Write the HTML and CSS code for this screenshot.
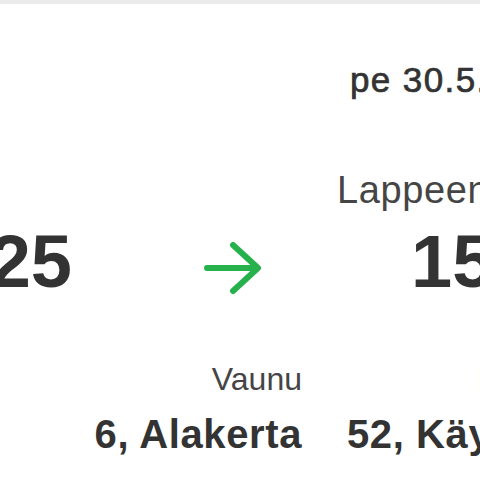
FILE: index.html
```html
<!DOCTYPE html>
<html lang="fi">
<head>
<meta charset="utf-8">
<title>Lippu</title>
<link rel="stylesheet" href="styles.css">
</head>
<body>
<div class="topbar"></div>
<main class="ticket">
  <div class="date">pe 30.5.2025</div>
  <div class="stations">
    <span class="station">Lappeenranta</span>
  </div>
  <div class="times">
    <div class="time-cell time-from"><span class="time">12:25</span></div>
    <svg class="arrow" width="58" height="54" viewBox="0 0 58 54" aria-hidden="true">
      <path d="M4 26 H53 M30 3 L55 26 L30 49" fill="none" stroke="#27b14c" stroke-width="6" stroke-linecap="round" stroke-linejoin="round"/>
    </svg>
    <div class="time-cell time-to"><span class="time">15:10</span></div>
  </div>
  <div class="seats">
    <div class="seat seat-car">
      <span class="label">Vaunu</span>
      <span class="value">6, Alakerta</span>
    </div>
    <div class="seat seat-place">
      <span class="label">Paikka</span>
      <span class="value">52, Käytävä</span>
    </div>
  </div>
</main>
</body>
</html>
```
FILE: styles.css
```css
html, body {
  margin: 0;
  padding: 0;
}
body {
  width: 480px;
  height: 480px;
  overflow: hidden;
  background: #ffffff;
  font-family: "Liberation Sans", Arial, sans-serif;
  color: #333333;
}
.topbar {
  height: 4px;
  background: #ebebeb;
}
.ticket {
  display: flex;
  flex-direction: column;
}
.date {
  margin-top: 56px;
  padding-left: 350px;
  font-size: 35px;
  line-height: 40px;
  font-weight: 400;
  letter-spacing: 1.4px;
  -webkit-text-stroke: 0.7px #333333;
  white-space: nowrap;
}
.stations {
  margin-top: 68px;
  padding-left: 337px;
  font-size: 38px;
  line-height: 44px;
  letter-spacing: 0.6px;
  color: #454545;
  white-space: nowrap;
}
.times {
  margin-top: 10px;
  display: flex;
  align-items: flex-start;
  height: 80px;
}
.time-cell {
  display: flex;
  flex: none;
  white-space: nowrap;
}
.time-from {
  width: 72px;
  justify-content: flex-end;
}
.time-to {
  margin-left: 150px;
}
.time {
  font-size: 74px;
  line-height: 80px;
  font-weight: 700;
}
.arrow {
  flex: none;
  margin-left: 131px;
  margin-top: 20px;
}
.seats {
  margin-top: 59px;
  display: flex;
  white-space: nowrap;
}
.seat {
  display: flex;
  flex: none;
  flex-direction: column;
  align-items: flex-end;
}
.seat-car {
  width: 302px;
}
.seat-place {
  margin-left: 45px;
}
.label {
  font-size: 32px;
  line-height: 36px;
  color: #454545;
}
.value {
  margin-top: 13px;
  font-size: 40px;
  line-height: 48px;
  font-weight: 700;
  letter-spacing: 0.6px;
}
```
